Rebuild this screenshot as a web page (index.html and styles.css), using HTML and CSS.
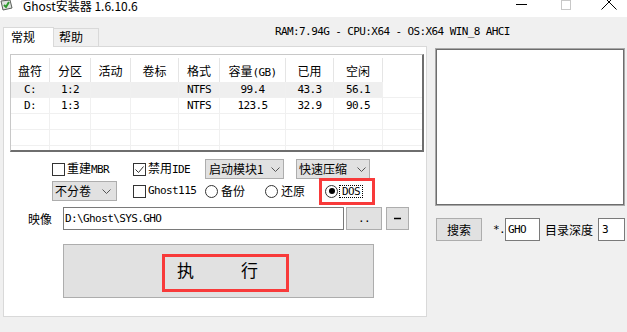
FILE: index.html
```html
<!DOCTYPE html>
<html lang="zh-CN">
<head>
  <meta charset="UTF-8">
  <title>Ghost安装器 1.6.10.6</title>
  <link rel="stylesheet" href="styles.css">
</head>
<body>
  <div class="titlebar">
    <svg class="app-icon" width="13" height="11" viewBox="0 0 13 11">
      <path d="M1 1 L10 0 L12 8 L3 10 Z" fill="#dfe3df" stroke="#5a5f5a"/>
      <path d="M4 5 L6 7 L9 2" fill="none" stroke="#2e9a2e" stroke-width="2"/>
    </svg>
    <span class="title">Ghost安装器 1.6.10.6</span>
    <div class="winctl">
      <svg class="ctl-min" width="11" height="10"><line x1="0" y1="4.5" x2="11" y2="4.5" stroke="#000"/></svg>
      <svg class="ctl-max" width="10" height="10"><rect x="0.5" y="0.5" width="9" height="9" fill="none" stroke="#c8c8c8"/></svg>
      <svg class="ctl-close" width="16" height="10"><path d="M0.5 -5.5 L15.5 9.5 M15.5 -5.5 L0.5 9.5" stroke="#000"/></svg>
    </div>
  </div>

  <div class="toprow">
    <div class="tab tab-active">常规</div>
    <div class="tab tab-help">帮助</div>
    <div class="status mono">RAM:7.94G - CPU:X64 - OS:X64 WIN_8 AHCI</div>
  </div>

  <div class="main">
    <div class="page">
      <div class="listview">
        <div class="lv-row lv-head">
          <span>盘符</span><span>分区</span><span>活动</span><span>卷标</span><span>格式</span><span>容量<span class="mono">(GB)</span></span><span>已用</span><span>空闲</span><span></span>
        </div>
        <div class="lv-row lv-item lv-selected mono">
          <span>C:</span><span>1:2</span><span></span><span></span><span>NTFS</span><span>99.4</span><span>43.3</span><span>56.1</span><span></span>
        </div>
        <div class="lv-row lv-item mono">
          <span>D:</span><span>1:3</span><span></span><span></span><span>NTFS</span><span>123.5</span><span>32.9</span><span>90.5</span><span></span>
        </div>
        <div class="lv-row lv-item"><span></span><span></span><span></span><span></span><span></span><span></span><span></span><span></span><span></span></div>
        <div class="lv-row lv-item"><span></span><span></span><span></span><span></span><span></span><span></span><span></span><span></span><span></span></div>
        <div class="lv-row lv-item"><span></span><span></span><span></span><span></span><span></span><span></span><span></span><span></span><span></span></div>
      </div>

      <div class="opt-row opt-row-1">
        <label class="check opt-mbr"><span class="box"></span><span>重建<span class="mono">MBR</span></span></label>
        <label class="check opt-ide">
          <span class="box"><svg width="11" height="11"><polyline points="1.5,5.5 4.5,8.5 9.5,2.5" fill="none" stroke="#333"/></svg></span><span>禁用<span class="mono">IDE</span></span>
        </label>
        <div class="select sel-boot">启动模块1<svg width="9" height="5"><polyline points="0.5,0.5 4.5,4.5 8.5,0.5" fill="none" stroke="#555"/></svg></div>
        <div class="select sel-zip">快速压缩<svg width="9" height="5"><polyline points="0.5,0.5 4.5,4.5 8.5,0.5" fill="none" stroke="#555"/></svg></div>
      </div>

      <div class="opt-row opt-row-2">
        <div class="select sel-split">不分卷<svg width="9" height="5"><polyline points="0.5,0.5 4.5,4.5 8.5,0.5" fill="none" stroke="#555"/></svg></div>
        <label class="check opt-g115"><span class="box"></span><span class="mono">Ghost115</span></label>
        <label class="radio-item opt-backup"><span class="radio"></span><span>备份</span></label>
        <label class="radio-item opt-restore"><span class="radio"></span><span>还原</span></label>
        <label class="radio-item opt-dos"><span class="radio radio-on"></span><span class="focus mono">DOS</span></label>
      </div>

      <div class="image-row">
        <span class="image-label">映像</span>
        <div class="textbox path-input mono">D:\Ghost\SYS.GHO</div>
        <div class="btn btn-browse mono">..</div>
        <div class="btn btn-minus"><svg width="7" height="3"><line x1="0" y1="1.5" x2="7" y2="1.5" stroke="#000" stroke-width="1.5"/></svg></div>
      </div>

      <div class="btn btn-run">
        <div class="run-mark"><span>执</span><span>行</span></div>
      </div>
    </div>

    <div class="side">
      <div class="filelist"></div>
      <div class="search-row">
        <div class="btn btn-search">搜索</div>
        <span class="star mono">*.</span>
        <div class="textbox ext-input mono">GHO</div>
        <span class="depth-label">目录深度</span>
        <div class="textbox depth-input mono">3</div>
      </div>
    </div>
  </div>
</body>
</html>
```

FILE: styles.css
```css
* {
  box-sizing: border-box;
}

body {
  margin: 0;
  width: 627px;
  height: 332px;
  overflow: hidden;
  background: #f0f0f0;
  color: #000;
  font-family: "Noto Sans CJK SC", "Microsoft YaHei", sans-serif;
  font-size: 12px;
  line-height: 12px;
}

/* SimSun-like latin text */
.mono {
  font-family: "DejaVu Sans Mono", monospace;
  font-size: 11px;
  letter-spacing: -0.6px;
}

/* title bar */
.titlebar {
  display: flex;
  align-items: flex-start;
  height: 17px;
  background: #fff;
}

.app-icon {
  flex: none;
}

.title {
  margin-left: 10px;
}

.winctl {
  display: flex;
  align-items: flex-start;
  margin-left: auto;
  margin-right: 10px;
}

.ctl-max {
  margin-left: 34px;
}

.ctl-close {
  margin-left: 30px;
}

/* tabs */
.toprow {
  display: flex;
  align-items: flex-end;
  height: 29px;
  padding-left: 3px;
}

.tab {
  height: 18px;
  padding: 2px 0 0 5px;
  border: 1px solid #d9d9d9;
  border-bottom: none;
  background: #f0f0f0;
}

.tab-active {
  position: relative;
  z-index: 1;
  width: 51px;
  height: 20px;
  margin-bottom: -1px;
  padding: 3px 0 0 7px;
  background: #fff;
}

.tab-help {
  width: 45px;
  border-left: none;
}

.status {
  align-self: flex-start;
  margin-top: 9px;
  margin-left: 176px;
}

/* main area */
.main {
  display: flex;
  align-items: flex-start;
}

.page {
  width: 424px;
  height: 271px;
  margin-left: 3px;
  padding: 7px 0 0 6px;
  background: #fff;
  border: 1px solid #d9d9d9;
}

.listview {
  width: 414px;
  height: 98px;
  overflow: hidden;
  background: #fff;
  border-top: 1px solid #c8c8c8;
  border-left: 1px solid #c8c8c8;
  border-right: 2px solid #6e6e6e;
  border-bottom: 2px solid #6e6e6e;
}

.lv-row {
  display: grid;
  grid-template-columns: 39px 41px 40px 48px 41px 66px 48px 49px 1fr;
}

.lv-head {
  height: 27px;
  padding-top: 3px;
}

.lv-head > span {
  padding-top: 7px;
  text-align: center;
  border-right: 1px solid #e5e5e5;
}

.lv-head > span:last-child {
  border-right: none;
}

.lv-item {
  height: 16px;
  border-bottom: 1px solid #f0f0f0;
}

.lv-item > span {
  padding-top: 1px;
  line-height: 14px;
  text-align: center;
  border-right: 1px solid #f0f0f0;
}

.lv-item > span:last-child {
  border-right: none;
}

.lv-selected > span:not(:last-child) {
  background: #efefef;
}

/* options */
.opt-row {
  display: flex;
  align-items: center;
  height: 20px;
  padding-left: 42px;
}

.opt-row-1 {
  margin-top: 7px;
}

.opt-row-2 {
  margin-top: 2px;
}

.check,
.radio-item {
  display: flex;
  align-items: center;
  gap: 2px;
}

.radio-item {
  gap: 3px;
}

.box {
  display: flex;
  align-items: center;
  justify-content: center;
  width: 13px;
  height: 13px;
  background: #fff;
  border: 1px solid #333;
}

.radio {
  display: flex;
  align-items: center;
  justify-content: center;
  width: 13px;
  height: 13px;
  background: #fff;
  border: 1px solid #333;
  border-radius: 50%;
}

.radio-on::after {
  content: "";
  width: 6px;
  height: 6px;
  border-radius: 50%;
  background: #000;
}

.opt-mbr { width: 81px; }
.opt-ide { width: 72px; }
.opt-g115 { width: 72px; }
.opt-backup { width: 60px; }
.opt-restore { width: 60px; }

.opt-dos {
  position: relative;
  height: 20px;
  gap: 1px;
}

/* red annotation box */
.opt-dos::after {
  content: "";
  position: absolute;
  left: -6px;
  top: -3px;
  width: 50px;
  height: 21px;
  border: 3px solid #f83a3a;
}

.focus {
  height: 13px;
  padding: 0 2px;
  line-height: 11px;
  border: 1px dotted #000;
}

.select {
  display: flex;
  align-items: center;
  justify-content: space-between;
  height: 20px;
  padding: 0 3px 0 2px;
  background: #e1e1e1;
  border: 1px solid #adadad;
}

.sel-boot {
  width: 79px;
  margin-right: 12px;
  padding-left: 3px;
}

.sel-zip {
  width: 74px;
}

.sel-split {
  width: 65px;
  margin-right: 16px;
  padding-right: 5px;
}

/* image path */
.image-row {
  display: flex;
  align-items: center;
  height: 23px;
  margin-top: 6px;
  padding-left: 18px;
}

.image-label {
  width: 35px;
}

.textbox {
  display: flex;
  align-items: center;
  height: 23px;
  padding-left: 2px;
  background: #fff;
  border: 1px solid #7a7a7a;
}

.path-input {
  width: 281px;
  padding-left: 1px;
}

.btn {
  display: flex;
  align-items: center;
  justify-content: center;
  height: 23px;
  background: #e1e1e1;
  border: 1px solid #adadad;
}

.btn-browse {
  width: 36px;
  margin-left: 2px;
}

.btn-minus {
  width: 23px;
  margin-left: 4px;
}

.btn-run {
  width: 311px;
  height: 54px;
  margin-top: 14px;
  margin-left: 53px;
  font-size: 17px;
  line-height: 17px;
}

.run-mark {
  display: flex;
  gap: 47px;
  height: 38px;
  margin-left: 14px;
  margin-top: 4px;
  padding: 4px 28px 0 12px;
  border: 3px solid #f83a3a;
}

/* right side */
.side {
  width: 190px;
  margin-left: 8px;
  margin-top: 2px;
}

.filelist {
  height: 158px;
  background: #fff;
  border: 1px solid #a8a8a8;
  box-shadow: inset 0 0 0 1px #6d6d6d;
}

.search-row {
  display: flex;
  align-items: center;
  height: 23px;
  margin-top: 12px;
}

.btn-search {
  width: 46px;
  margin-left: 1px;
}

.star {
  width: 12px;
  margin-left: 11px;
}

.ext-input {
  width: 35px;
}

.depth-label {
  margin: 0 5px;
}

.depth-input {
  width: 27px;
  padding-left: 3px;
}
```
